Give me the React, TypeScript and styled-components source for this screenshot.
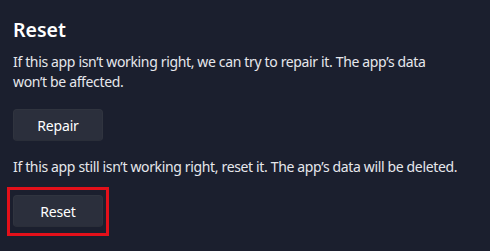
import React from "react";
import styled, { createGlobalStyle } from "styled-components";

const Global = createGlobalStyle`
  html, body { margin: 0; padding: 0; background: #1b1f2e; }
  body { font-family: "Noto Sans", "Open Sans", sans-serif; color: #ffffff; }
`;

const Page = styled.div`
  width: 490px;
  height: 251px;
  box-sizing: border-box;
  padding: 16px 30px 0 13px;
  display: flex;
  flex-direction: column;
  align-items: flex-start;
  background: #1b1f2e;
`;

const Title = styled.h2`
  margin: 0;
  font-size: 19.5px;
  line-height: 28px;
  font-weight: 600;
  color: #ffffff;
`;

const Text = styled.p<{ $top: number }>`
  margin: ${(p) => p.$top}px 0 0 0;
  font-size: 14px;
  line-height: 20px;
  color: #e6e7ec;
  letter-spacing: -0.35px;
`;

const Button = styled.button<{ $top?: number }>`
  margin-top: ${(p) => p.$top ?? 0}px;
  width: 90px;
  height: 32px;
  border-radius: 4px;
  border: 1px solid #30343f;
  border-bottom-color: #2a2e39;
  background: #2b2f3c;
  color: #ffffff;
  font-family: "Noto Sans", "Open Sans", sans-serif;
  font-size: 14px;
  letter-spacing: -0.2px;
  padding: 0;
  display: flex;
  align-items: center;
  justify-content: center;
`;

const Highlight = styled.div`
  margin-top: 10px;
  margin-left: -6px;
  border: 3px solid #e3101a;
  padding: 5px 3px 6px 3px;
  display: flex;
`;

export default function App() {
  return (
    <>
      <Global />
      <Page>
        <Title>Reset</Title>
        <Text $top={8}>
          If this app isn’t working right, we can try to repair it. The app’s data won’t be affected.
        </Text>
        <Button $top={17}>Repair</Button>
        <Text $top={16}>
          If this app still isn’t working right, reset it. The app’s data will be deleted.
        </Text>
        <Highlight>
          <Button>Reset</Button>
        </Highlight>
      </Page>
    </>
  );
}
